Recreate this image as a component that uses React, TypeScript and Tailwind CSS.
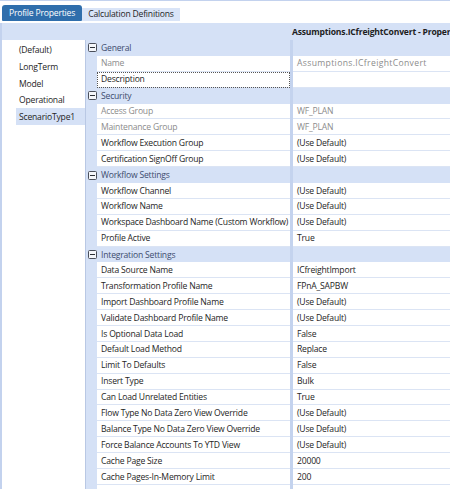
import React from "react";

type Row =
  | { cat: string }
  | { label: string; value: string; dim?: boolean; focus?: boolean; wide?: boolean };

const rows: Row[] = [
  { cat: "General" },
  { label: "Name", value: "Assumptions.ICfreightConvert", dim: true, wide: true },
  { label: "Description", value: "", focus: true },
  { cat: "Security" },
  { label: "Access Group", value: "WF_PLAN", dim: true },
  { label: "Maintenance Group", value: "WF_PLAN", dim: true },
  { label: "Workflow Execution Group", value: "(Use Default)" },
  { label: "Certification SignOff Group", value: "(Use Default)" },
  { cat: "Workflow Settings" },
  { label: "Workflow Channel", value: "(Use Default)" },
  { label: "Workflow Name", value: "(Use Default)" },
  { label: "Workspace Dashboard Name (Custom Workflow)", value: "(Use Default)" },
  { label: "Profile Active", value: "True" },
  { cat: "Integration Settings" },
  { label: "Data Source Name", value: "ICfreightImport" },
  { label: "Transformation Profile Name", value: "FPnA_SAPBW" },
  { label: "Import Dashboard Profile Name", value: "(Use Default)" },
  { label: "Validate Dashboard Profile Name", value: "(Use Default)" },
  { label: "Is Optional Data Load", value: "False" },
  { label: "Default Load Method", value: "Replace" },
  { label: "Limit To Defaults", value: "False" },
  { label: "Insert Type", value: "Bulk" },
  { label: "Can Load Unrelated Entities", value: "True" },
  { label: "Flow Type No Data Zero View Override", value: "(Use Default)" },
  { label: "Balance Type No Data Zero View Override", value: "(Use Default)" },
  { label: "Force Balance Accounts To YTD View", value: "(Use Default)" },
  { label: "Cache Page Size", value: "20000" },
  { label: "Cache Pages-In-Memory Limit", value: "200" },
  { label: "", value: "" },
];

const items = ["(Default)", "LongTerm", "Model", "Operational", "ScenarioType1"];

function Collapse() {
  return (
    <svg width="9" height="9" viewBox="0 0 9 9" className="shrink-0">
      <rect x="0.5" y="0.5" width="8" height="8" rx="1" fill="#f4f6fa" stroke="#4a4f5a" />
      <rect x="2" y="4" width="5" height="1" fill="#2b2f36" />
    </svg>
  );
}

export default function App() {
  return (
    <div
      className="w-[450px] h-[489px] overflow-hidden bg-white flex flex-col text-[8.6px] tracking-[-0.2px] text-[#1e1e1e]"
      style={{ fontFamily: '"Open Sans", "Noto Sans", sans-serif' }}
    >
      <div className="h-[1px] bg-[#c3d2ee] shrink-0" />
      <div className="h-[22px] shrink-0 flex items-end pl-[2px] pb-[2px]">
        <div className="h-[16px] w-[80px] bg-[#2f6eac] text-white rounded-t-[3px] rounded-b-[1px] flex items-center justify-center leading-none whitespace-nowrap">
          Profile Properties
        </div>
        <div className="h-[13px] w-[98px] bg-[#d9e4f7] flex items-center justify-center leading-none whitespace-nowrap text-[#1e1e1e]">
          Calculation Definitions
        </div>
      </div>
      <div className="flex-1 flex flex-col border-l-2 border-[#c3d2ee] min-h-0">
        <div className="h-[17px] shrink-0 bg-[#d5e1f6] flex items-center pl-[290px] pt-[1px] whitespace-nowrap overflow-hidden font-bold leading-none">
          Assumptions.ICfreightConvert - Properties
        </div>
        <div className="flex-1 flex min-h-0">
          <div className="w-[84px] shrink-0 bg-white border-r border-[#b9c8e4] pt-[1px]">
            {items.map((it, i) => (
              <div
                key={it}
                className={`ml-[14px] h-[16.8px] flex items-center pl-[3px] pt-[2px] whitespace-nowrap ${
                  i === 4 ? "bg-[#d5e1f6]" : ""
                }`}
              >
                {it}
              </div>
            ))}
          </div>
          <div className="flex-1 min-w-0 overflow-hidden">
            {rows.map((r, i) =>
              "cat" in r ? (
                <div key={i} className="h-[15.9px] flex bg-[#d5e1f6]">
                  <div className="w-[11px] shrink-0 flex items-center justify-center pl-[1px]">
                    <Collapse />
                  </div>
                  <div className="w-[193px] shrink-0 flex items-center pl-[4px] pt-[1px] text-[#3d4c6e] whitespace-nowrap">
                    {r.cat}
                  </div>
                  <div className="w-[3px] shrink-0 bg-[#c4d3ee]" />
                  <div className="flex-1" />
                </div>
              ) : (
                <div key={i} className="h-[15.9px] flex">
                  <div className="w-[11px] shrink-0 bg-[#d5e1f6]" />
                  <div
                    className={`w-[193px] shrink-0 flex items-center pl-[4px] pt-[1px] whitespace-nowrap border-b border-[#dbe4f4] ${
                      r.dim ? "text-[#8c8c8c]" : ""
                    } ${r.focus ? "outline outline-1 outline-dotted outline-[#555] -outline-offset-1" : ""}`}
                  >
                    {r.label}
                  </div>
                  <div className="w-[3px] shrink-0 bg-[#c4d3ee]" />
                  <div
                    className={`flex-1 flex items-center pl-[4px] pt-[1px] whitespace-nowrap overflow-hidden border-b border-[#dbe4f4] ${
                      r.dim ? "text-[#8c8c8c]" : ""
                    } ${r.wide ? "tracking-[0.35px]" : ""}`}
                  >
                    {r.value}
                  </div>
                </div>
              )
            )}
          </div>
        </div>
      </div>
    </div>
  );
}
